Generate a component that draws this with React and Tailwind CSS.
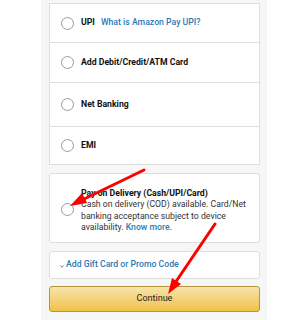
import React from "react";

const Radio = () => (
  <span className="block w-[13px] h-[13px] rounded-full border border-[#9a9a9a] bg-white shrink-0" />
);

const OptionRow = ({ label, link, h }) => (
  <div className={`flex items-center border border-[#dedede] bg-white pl-[11px] -mt-px first:mt-0 ${h}`}>
    <Radio />
    <span className="ml-[7px] font-bold text-[#111]">{label}</span>
    {link && <span className="ml-[6px] font-medium text-[#2b7bb5]">{link}</span>}
  </div>
);

const App = () => {
  return (
    <div className="relative w-[281px] h-[320px] overflow-hidden bg-white text-[8.7px] leading-[11.4px] font-['Roboto',sans-serif]">
      <div className="ml-[41px] w-[226px] h-full bg-[#f6f6f6] pl-[8px] pr-[7px] pt-[3px] flex flex-col">
        <div className="flex flex-col rounded-[3px]">
          <OptionRow label="UPI" link="What is Amazon Pay UPI?" h="h-[40px]" />
          <OptionRow label="Add Debit/Credit/ATM Card" h="h-[41px]" />
          <OptionRow label="Net Banking" h="h-[45px]" />
          <OptionRow label="EMI" h="h-[39px]" />
        </div>

        <div className="mt-[8px] h-[70px] flex items-start border border-[#dedede] rounded-[3px] bg-white pl-[11px] pr-[8px]">
          <div className="mt-[29px] flex">
            <Radio />
          </div>
          <div className="ml-[7px] mt-[14px] text-[#333]">
            <div className="font-bold text-[#111]">Pay on Delivery (Cash/UPI/Card)</div>
            <p>
              Cash on delivery (COD) available. Card/Net banking acceptance subject to device availability.{" "}
              <span className="font-medium text-[#2b7bb5]">Know more.</span>
            </p>
          </div>
        </div>

        <div className="mt-[8px] h-[28px] flex items-center border border-[#dedede] rounded-[3px] bg-white pl-[10px] font-medium text-[#2b7bb5]">
          <svg width="4" height="3" viewBox="0 0 4 3" className="mr-[2px] mt-[2px]">
            <path d="M0.5 0.5 L2 2.3 L3.5 0.5" fill="none" stroke="#2b7bb5" strokeWidth="0.9" />
          </svg>
          <span>Add Gift Card or Promo Code</span>
        </div>

        <button className="mt-[7px] h-[26px] w-full rounded-[3px] border border-[#b69440] bg-gradient-to-b from-[#f8e3a9] to-[#efc245] text-[9px] text-[#222] flex items-center justify-center">
          Continue
        </button>
      </div>

      <svg className="absolute inset-0 pointer-events-none" width="281" height="320" viewBox="0 0 281 320">
        <line x1="144" y1="170" x2="82" y2="200" stroke="#f00" strokeWidth="3" strokeLinecap="round" />
        <polygon points="70,206 87,203 82,193" fill="#f00" />
        <line x1="215" y1="224" x2="175" y2="283" stroke="#f00" strokeWidth="3" strokeLinecap="round" />
        <polygon points="168,294 181,284 172,278" fill="#f00" />
      </svg>
    </div>
  );
};

export default App;
